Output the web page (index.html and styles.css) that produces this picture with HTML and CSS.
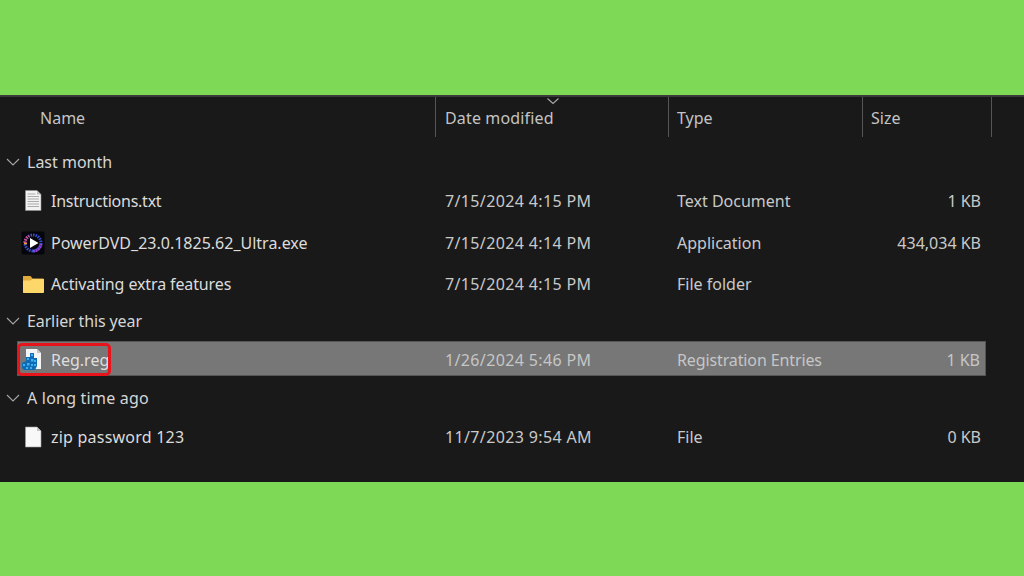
FILE: index.html
```html
<!DOCTYPE html>
<html lang="en">
<head>
<meta charset="utf-8">
<title>Explorer list</title>
<link rel="stylesheet" href="styles.css">
</head>
<body>
<div class="page">
  <div class="band band-top"></div>
  <main class="panel">
    <div class="head">
      <div class="hcell hname">Name</div>
      <div class="hcell hdiv hdate">Date modified
        <svg class="sort" width="14" height="8" viewBox="0 0 14 8"><path d="M1.5 1.5L7 6.500L12.500 1.500" fill="none" stroke="#a8a8a8" stroke-width="1.1"/></svg>
      </div>
      <div class="hcell hdiv">Type</div>
      <div class="hcell hdiv hlast">Size</div>
    </div>

    <div class="group g1">
      <svg class="chev" width="14" height="8" viewBox="0 0 14 8"><path d="M1 1L7 7L13 1" fill="none" stroke="#a6a6a6" stroke-width="1.1"/></svg>
      <span>Last month</span>
    </div>
    <div class="row r1">
      <div class="name">
        <svg class="ico" width="24" height="24" viewBox="0 0 24 24"><path d="M4.500 1.500H16L20 5.500V21.500H4.500Z" fill="#f2f2f2" stroke="#8f8f8f" stroke-width=".6"/><path d="M16 1.500V5.500H20Z" fill="#bdbdbd"/><path d="M6.500 5H14.500M6.500 7.500H18M6.500 10H18M6.500 12.500H18M6.500 15H18M6.500 17.500H18" stroke="#ababab" stroke-width="1"/></svg>
        <span class="t-narrow">Instructions.txt</span>
      </div>
      <div class="date">7/15/2024 4:15 PM</div><div class="type">Text Document</div><div class="size">1 KB</div>
    </div>
    <div class="row r2">
      <div class="name">
        <svg class="ico" width="24" height="24" viewBox="0 0 24 24">
          <rect x=".5" y=".5" width="23" height="23" rx="2" fill="#05050c"/>
          <circle cx="12" cy="12" r="8" fill="none" stroke="#3a4fd0" stroke-width="3" stroke-dasharray="1.500 1"/>
          <path d="M4 12A8 8 0 0 1 8 5" fill="none" stroke="#d84a8a" stroke-width="3" stroke-dasharray="1.500 1"/>
          <path d="M20 13A8 8 0 0 1 12 20" fill="none" stroke="#a23fd0" stroke-width="3" stroke-dasharray="1.500 1"/>
          <path d="M3 12.500H6" stroke="#e89a30" stroke-width="1.500"/>
          <path d="M9 7L17.500 12L9 17Z" fill="#fff"/>
        </svg>
        <span>PowerDVD_23.0.1825.62_Ultra.exe</span>
      </div>
      <div class="date">7/15/2024 4:14 PM</div><div class="type">Application</div><div class="size">434,034 KB</div>
    </div>
    <div class="row r3">
      <div class="name">
        <svg class="ico" width="24" height="24" viewBox="0 0 24 24"><path d="M2 4.500Q2 4 2.500 4H9.500L11.500 6.500H22.500V20.500H2Z" fill="#e0aa3a"/><path d="M2 8.500H9.500L11.500 7H23V20Q23 21 22 21H3Q2 21 2 20Z" fill="#fcd86a"/></svg>
        <span class="t-narrow-s">Activating extra features</span>
      </div>
      <div class="date">7/15/2024 4:15 PM</div><div class="type">File folder</div><div class="size"></div>
    </div>

    <div class="group g2">
      <svg class="chev" width="14" height="8" viewBox="0 0 14 8"><path d="M1 1L7 7L13 1" fill="none" stroke="#a6a6a6" stroke-width="1.1"/></svg>
      <span class="t-narrow-s">Earlier this year</span>
    </div>
    <div class="row sel">
      <div class="name">
        <svg class="ico" width="24" height="24" viewBox="0 0 24 24">
          <path d="M5 1H16L20 5V21H5Z" fill="#f4f4f4"/><path d="M16 1V5H20Z" fill="#c4c4c4"/>
          <path d="M9 5H13V10H16V18L14 22H3L1 20V15L5 13V9H9Z" fill="#0f6cb4"/>
          <g fill="#3fb0ee">
            <rect x="10" y="6" width="2" height="2"/>
            <rect x="6" y="10" width="2" height="2"/><rect x="10" y="11" width="2.500" height="2.500"/>
            <rect x="13" y="12" width="2" height="2"/>
            <rect x="2" y="16" width="2" height="2"/><rect x="6" y="15" width="2.500" height="2.500"/><rect x="10" y="16" width="2" height="2"/><rect x="13" y="16" width="2" height="2"/>
            <rect x="5" y="19" width="2" height="2"/><rect x="9" y="19" width="2" height="2"/>
          </g>
        </svg>
        <span>Reg.reg</span>
      </div>
      <div class="date">1/26/2024 5:46 PM</div><div class="type t-narrow-s">Registration Entries</div><div class="size">1 KB</div>
      <div class="mark"></div>
    </div>

    <div class="group g3">
      <svg class="chev" width="14" height="8" viewBox="0 0 14 8"><path d="M1 1L7 7L13 1" fill="none" stroke="#a6a6a6" stroke-width="1.1"/></svg>
      <span class="t-wide">A long time ago</span>
    </div>
    <div class="row r4">
      <div class="name">
        <svg class="ico" width="24" height="24" viewBox="0 0 24 24"><path d="M4.500 2H16L20 6V22H4.500Z" fill="#f8f8f8" stroke="#a0a0a0" stroke-width=".6"/><path d="M16 2V6H20Z" fill="#c4c4c4"/></svg>
        <span class="t-wide">zip password 123</span>
      </div>
      <div class="date">11/7/2023 9:54 AM</div><div class="type">File</div><div class="size">0 KB</div>
    </div>
  </main>
  <div class="band band-bottom"></div>
</div>
</body>
</html>
```

FILE: styles.css
```css
* { box-sizing: border-box; }
html, body { margin: 0; padding: 0; }
body { background: #7ed957; font-family: "Noto Sans", "Open Sans", sans-serif; }
.page { width: 1024px; height: 576px; display: flex; flex-direction: column; overflow: hidden; }
.band { background: #7ed957; }
.band-top { height: 95px; }
.band-bottom { height: 94px; }
.panel { height: 387px; background: #191919; border-top: 2px solid #3a3a3a; color: #d2d2d2; font-size: 16px; }

.head { display: grid; grid-template-columns: 435px 233px 194px 130px; height: 40px; color: #c4c4c4; }
.hcell { padding-top: 10px; line-height: 22px; padding-left: 8px; position: relative; }
.hname { padding-left: 40px; }
.hdate { padding-left: 9px; letter-spacing: .15px; }
.hdiv { border-left: 1px solid #555; }
.hlast { border-right: 1px solid #555; }
.sort { position: absolute; left: 110px; top: 0; }

.group { display: flex; align-items: center; height: 38px; padding-left: 6px; gap: 7px; color: #d6d6d6; }
.g1 { margin-top: 6px; }
.g2 { margin-top: 1px; }
.g3 { margin-top: 3px; }

.row { position: relative; display: grid; grid-template-columns: 418px 233px 194px 124px; align-items: center; width: 969px; margin-left: 17px; height: 34px; color: #c9c9c9; }
.row > div { padding-left: 10px; }
.row > .name { display: flex; align-items: center; padding-left: 4px; gap: 6px; color: #dcdcdc; }
.row > .type { padding-left: 9px; }
.row > .size { padding: 0 5px 0 0; text-align: right; }
.date { letter-spacing: .36px; }
.t-narrow { letter-spacing: -.25px; }
.t-narrow-s { letter-spacing: -.12px; }
.t-wide { letter-spacing: .22px; }
.ico { flex: none; }
.r1 { margin-top: 3px; }
.r2 { margin-top: 8px; }
.r3 { margin-top: 7px; }
.r4 { margin-top: 3px; }
.sel { height: 35px; margin-top: 1px; padding-top: 2px; background: #777; border: 1px solid #555; color: #c6c6c6; }
.row.sel { grid-template-columns: 417px 233px 194px 123px; }
.sel > .name { color: #dedede; }
.row.sel > .name { padding-left: 3px; }
.mark { position: absolute; left: -1px; top: 1px; width: 94px; height: 33px; border: 3px solid #e8141c; border-radius: 5px; }
```
